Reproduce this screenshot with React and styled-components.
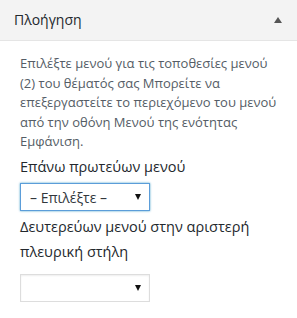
import React from "react";
import styled, { createGlobalStyle } from "styled-components";

const Global = createGlobalStyle`
  html, body { margin: 0; padding: 0; background: #fff; }
  body { font-family: "Open Sans", "Noto Sans", sans-serif; -webkit-font-smoothing: antialiased; }
  * { box-sizing: border-box; }
`;

const Panel = styled.div`
  width: 297px;
  background: #fff;
`;

const Header = styled.div`
  height: 41px;
  background: #f3f3f3;
  border-bottom: 1px solid #e5e5e5;
  display: flex;
  align-items: center;
  justify-content: space-between;
  padding: 0 15px 0 14px;
`;

const Title = styled.h3`
  margin: 0;
  font-size: 14px;
  font-weight: 400;
  line-height: 20px;
  color: #23282d;
`;

const Toggle = styled.span`
  width: 0;
  height: 0;
  border-left: 4px solid transparent;
  border-right: 4px solid transparent;
  border-bottom: 6px solid #555;
  margin-top: -1px;
`;

const Body = styled.div`
  padding: 13px 20px 12px 20px;
  display: flex;
  flex-direction: column;
`;

const Description = styled.p`
  margin: 0 0 3px;
  font-size: 13px;
  line-height: 19.5px;
  color: #555d66;
`;

const Control = styled.div`
  display: flex;
  flex-direction: column;
  align-items: flex-start;
  margin-top: ${(p) => p.$top || 0}px;
`;

const Label = styled.label`
  display: block;
  font-size: 14.5px;
  font-weight: 400;
  line-height: 24.5px;
  color: #23282d;
  margin-bottom: ${(p) => p.$gap || 4}px;
`;

const SelectWrap = styled.div`
  position: relative;
  width: 130px;
  height: 28px;
  &::after {
    content: "";
    position: absolute;
    right: 9px;
    top: 11px;
    border-left: 3.5px solid transparent;
    border-right: 3.5px solid transparent;
    border-top: 6px solid #111;
    pointer-events: none;
  }
`;

const Select = styled.select`
  appearance: none;
  -webkit-appearance: none;
  width: 100%;
  height: 100%;
  margin: 0;
  padding: 0 20px 0 9px;
  font-family: "Open Sans", "Noto Sans", sans-serif;
  font-size: 14px;
  color: #32373c;
  background: #fff;
  border: 1px solid ${(p) => (p.$focus ? "#5b9dd9" : "#ddd")};
  box-shadow: ${(p) =>
    p.$focus ? "0 0 2px rgba(30,140,190,0.8)" : "inset 0 1px 2px rgba(0,0,0,0.07)"};
  border-radius: 0;
  outline: none;
`;

export default function App() {
  return (
    <>
      <Global />
      <Panel>
        <Header>
          <Title>Πλοήγηση</Title>
          <Toggle />
        </Header>
        <Body>
          <Description>
            Επιλέξτε μενού για τις τοποθεσίες μενού (2) του θέματός σας Μπορείτε να
            επεξεργαστείτε το περιεχόμενο του μενού από την οθόνη Μενού της ενότητας
            Εμφάνιση.
          </Description>
          <Control>
            <Label $gap={4}>Επάνω πρωτεύων μενού</Label>
            <SelectWrap>
              <Select $focus defaultValue="0">
                <option value="0">– Επιλέξτε –</option>
              </Select>
            </SelectWrap>
          </Control>
          <Control $top={4}>
            <Label $gap={10}>Δευτερεύων μενού στην αριστερή πλευρική στήλη</Label>
            <SelectWrap>
              <Select defaultValue="">
                <option value=""></option>
              </Select>
            </SelectWrap>
          </Control>
        </Body>
      </Panel>
    </>
  );
}
